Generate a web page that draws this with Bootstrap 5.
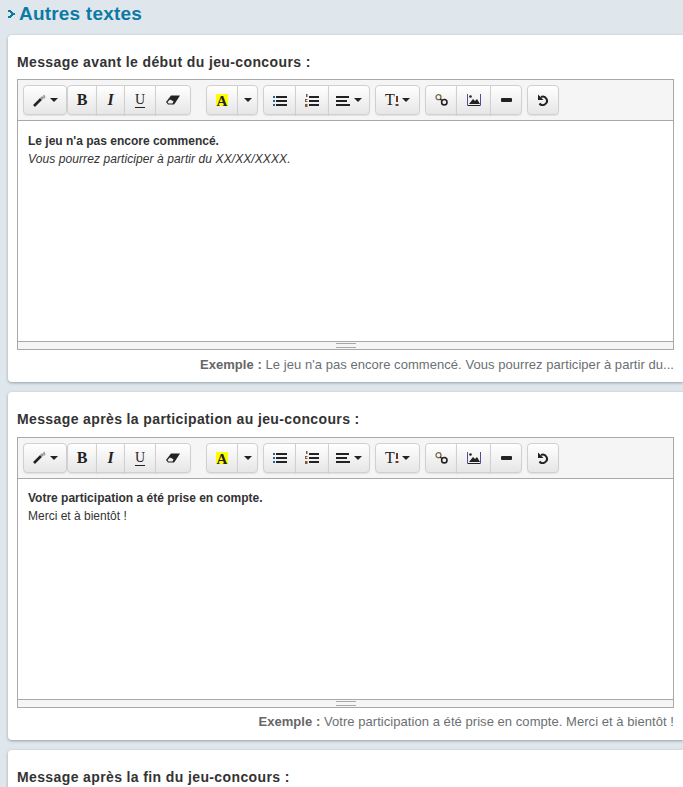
<!DOCTYPE html>
<html lang="fr">
  <head>
    <meta charset="UTF-8" />
    <meta name="viewport" content="width=device-width, initial-scale=1.0" />
    <title>Autres textes</title>
    <link
      href="https://cdn.jsdelivr.net/npm/bootstrap@5.3.0/dist/css/bootstrap.min.css"
      rel="stylesheet"
    />
    <style>
      html, body { height: 787px; overflow: hidden; }
      body { background: #dfe7ed; font-family: "Liberation Sans", Arial, sans-serif; color: #333; }
      .page-wrap { padding: 0 0 0 8px; }
      .page-title { height: 35px; margin: 0; font-size: 19px; font-weight: 700; color: #0b7aa5; line-height: 28px; letter-spacing: .2px; }
      .page-title svg { margin-right: 4px; vertical-align: 2px; }
      .msg-card { background: #fff; border-radius: 4px 0 0 4px; padding: 17px 9px 8.4px 9px; margin-bottom: 10px; box-shadow: 0 1px 3px rgba(60, 70, 80, .45); }
      .msg-label { font-size: 14px; font-weight: 700; line-height: 20px; margin: 0 0 7.4px; letter-spacing: .38px; color: #333; }
      .ed-box { border: 1px solid #a9a9a9; height: 271px; }
      .ed-toolbar { height: 41px; background: #f5f5f5; border-bottom: 1px solid #a9a9a9; padding: 5px 0 0 5px; }
      .ed-btn { height: 30px; padding: 0; display: flex; align-items: center; justify-content: center; background: linear-gradient(#fff, #e6e6e6); border: 1px solid #d0d0d0; color: #222; box-shadow: 0 1px 1px rgba(0, 0, 0, .08); font-family: "Liberation Serif", serif; font-size: 15px; line-height: 1; border-radius: 4px; }
      .ed-btn:hover { background: #e6e6e6; border-color: #ccc; color: #222; }
      .ed-caret { display: inline-block; border-top: 4px solid #222; border-left: 4px solid transparent; border-right: 4px solid transparent; margin-left: 3px; }
      .bw-21 { width: 21px; }
      .bw-29 { width: 29px; }
      .bw-30 { width: 30px; }
      .bw-32 { width: 32px; }
      .bw-33 { width: 33px; }
      .bw-34 { width: 34px; }
      .bw-35 { width: 35px; }
      .bw-36 { width: 36px; }
      .bw-42 { width: 42px; }
      .bw-44 { width: 44px; }
      .bw-45 { width: 45px; }
      .tb-gap-lg { margin-left: 15px; }
      .tb-gap { margin-left: 5px; }
      .ed-bold { font-size: 16px; font-weight: 700; }
      .ed-under { text-decoration: underline; text-underline-offset: 3px; text-decoration-thickness: 1px; font-size: 14px; }
      .ed-hilite { background: #ff0; font-weight: 700; width: 12px; height: 12px; display: block; line-height: 14px; font-size: 15px; text-align: center; }
      .ed-size { font-size: 16px; }
      .ed-body { height: 220px; padding: 10.6px 10px; font-size: 12px; line-height: 18px; }
      .ed-body p { margin: 0; }
      .ed-body .fst-italic { letter-spacing: .09px; }
      .ed-resize { height: 8px; background: #f5f5f5; border-top: 1px solid #a9a9a9; display: flex; justify-content: center; align-items: center; }
      .ed-grip { width: 20px; height: 5px; border-top: 1px solid #a9a9a9; border-bottom: 1px solid #a9a9a9; position: relative; }
      .ex-line { font-size: 13px; line-height: 18px; text-align: right; color: #6b6f73; margin-top: 5.6px; white-space: nowrap; overflow: hidden; letter-spacing: .05px; }
      .ex-line b { color: #666; font-weight: 700; }
    </style>
  </head>
  <body>
    <div class="page-wrap">
      <h1 class="page-title">
        <svg width="7" height="8" viewBox="0 0 7 8"><path d="M0 0h3v1h1v1h1v1h2v2H5v1H4v1H3v1H0V6h2V5h1V3H2V2H0z" fill="#0b7aa5" /></svg>Autres textes
      </h1>

      <div class="msg-card">
        <p class="msg-label">Message avant le début du jeu-concours :</p>
        <div class="ed-box">
          <div class="ed-toolbar d-flex" id="toolbar">
            <div class="btn-group">
              <button class="btn ed-btn bw-44" type="button">
                <svg width="14" height="13" viewBox="0 0 14 13"><path d="M1 12 8 5" stroke="#222" stroke-width="2.600" /><path d="M8 5l2-2" stroke="#999" stroke-width="2.600" /><path d="M10 0l.6 1.400L12 1l-.4 1.400L13 3l-1.400.4V5l-1-1" fill="#8a8a6a" /></svg>
                <span class="ed-caret"></span>
              </button>
            </div>
            <div class="btn-group">
              <button class="btn ed-btn bw-30 ed-bold" type="button">B</button>
              <button class="btn ed-btn bw-29 ed-bold fst-italic" type="button">I</button>
              <button class="btn ed-btn bw-32 ed-under" type="button">U</button>
              <button class="btn ed-btn bw-36" type="button">
                <svg width="14" height="10" viewBox="0 0 14 10"><path d="M5 .5h9L9.500 7.500 8 9.500H2L0 7z" fill="#222" /><path d="M1.500 7 4 4.500l3.500 1.800L6.500 8.500H2.500z" fill="#eee" /></svg>
              </button>
            </div>
            <div class="btn-group tb-gap-lg">
              <button class="btn ed-btn bw-32" type="button"><span class="ed-hilite">A</span></button>
              <button class="btn ed-btn bw-21" type="button"><span class="ed-caret m-0"></span></button>
            </div>
            <div class="btn-group tb-gap">
              <button class="btn ed-btn bw-33" type="button">
                <svg width="14" height="11" viewBox="0 0 14 11"><path d="M0 1h2v2H0zM0 5h2v2H0zM0 9h2v2H0z" fill="#28628c" /><path d="M3 1h11v2H3zM3 5h11v2H3zM3 9h11v2H3z" fill="#222" /></svg>
              </button>
              <button class="btn ed-btn bw-34" type="button">
                <svg width="14" height="13" viewBox="0 0 14 13"><path d="M1 0h1.500v3H1zM0 5h2.500v1H1v1h1.500v1H0zM0 10h2.500v3H0z" fill="#7d5a3c" /><path d="M4 2h10v2H4zM4 6h10v2H4zM4 10h10v2H4z" fill="#222" /></svg>
              </button>
              <button class="btn ed-btn bw-42" type="button">
                <svg width="14" height="11" viewBox="0 0 14 11"><path d="M0 1h13v2H0zM0 5h11v2H0zM0 9h14v2H0z" fill="#222" /></svg>
                <span class="ed-caret ms-1"></span>
              </button>
            </div>
            <div class="btn-group tb-gap">
              <button class="btn ed-btn bw-45 ed-size" type="button">T<svg width="4" height="11" viewBox="0 0 4 11"><path d="M1 1h2v6H1zM.5 9h3v2h-3z" fill="#6b3a2a" /></svg><span class="ed-caret"></span></button>
            </div>
            <div class="btn-group tb-gap">
              <button class="btn ed-btn bw-32" type="button">
                <svg width="13" height="12" viewBox="0 0 13 12" fill="none"><circle cx="3.500" cy="3.200" r="2.500" stroke="#7a6a4a" stroke-width="1.300" /><circle cx="9.300" cy="8.200" r="2.700" stroke="#222" stroke-width="1.600" /><path d="M5 5 7 6.500" stroke="#222" stroke-width="1.300" /></svg>
              </button>
              <button class="btn ed-btn bw-35" type="button">
                <svg width="14" height="12" viewBox="0 0 14 12" fill="none"><path d="M.5 0v11.500h13V0" stroke="#5b4a9c" /><path d="M1 11.500h12" stroke="#222" /><path d="M2 10 6 5l2 2 2-2 3 5z" fill="#222" /><circle cx="3.500" cy="2.500" r="1.300" fill="#222" /></svg>
              </button>
              <button class="btn ed-btn bw-32" type="button">
                <svg width="11" height="4" viewBox="0 0 11 4"><rect width="11" height="4" rx="1" fill="#222" /></svg>
              </button>
            </div>
            <div class="btn-group tb-gap">
              <button class="btn ed-btn bw-32" type="button">
                <svg width="12" height="12" viewBox="0 0 12 12" fill="none"><path d="M4 3a4.200 4.200 0 1 1-1.500 6.500" stroke="#222" stroke-width="2" /><path d="M1 .5v5.500h5.500z" fill="#222" /></svg>
              </button>
            </div>
          </div>
          <div class="ed-body">
            <p class="fw-bold">Le jeu n'a pas encore commencé.</p>
            <p class="fst-italic">Vous pourrez participer à partir du XX/XX/XXXX.</p>
          </div>
          <div class="ed-resize"><span class="ed-grip"></span></div>
        </div>
        <div class="ex-line"><b>Exemple :</b> Le jeu n'a pas encore commencé. Vous pourrez participer à partir du...</div>
      </div>

      <div class="msg-card">
        <p class="msg-label">Message après la participation au jeu-concours :</p>
        <div class="ed-box">
          <div class="ed-toolbar d-flex" data-copy="toolbar"></div>
          <div class="ed-body">
            <p class="fw-bold">Votre participation a été prise en compte.</p>
            <p>Merci et à bientôt !</p>
          </div>
          <div class="ed-resize"><span class="ed-grip"></span></div>
        </div>
        <div class="ex-line"><b>Exemple :</b> Votre participation a été prise en compte. Merci et à bientôt !</div>
      </div>

      <div class="msg-card">
        <p class="msg-label">Message après la fin du jeu-concours :</p>
      </div>
    </div>

    <script src="https://cdn.jsdelivr.net/npm/bootstrap@5.3.0/dist/js/bootstrap.bundle.min.js"></script>
    <script>
      // same toolbar on every editor
      const toolbar = document.getElementById("toolbar");
      document.querySelectorAll("[data-copy]").forEach((el) => {
        el.innerHTML = toolbar.innerHTML;
      });
    </script>
  </body>
</html>
